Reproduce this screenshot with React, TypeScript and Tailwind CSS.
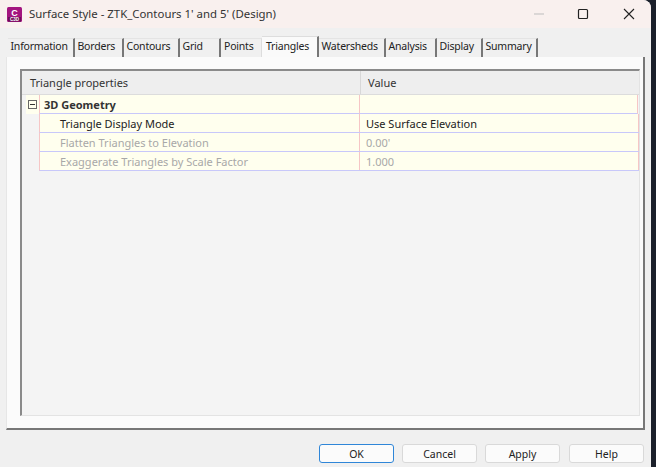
const tabs: [string, string][] = [
  ["Information", "w-[67px]"],
  ["Borders", "w-[49px]"],
  ["Contours", "w-[56px]"],
  ["Grid", "w-[41px]"],
  ["Points", "w-[41px]"],
  ["Triangles", "w-[57px]"],
  ["Watersheds", "w-[67px]"],
  ["Analysis", "w-[51px]"],
  ["Display", "w-[46px]"],
  ["Summary", "w-[55px]"],
];

const rows: { name: string; value: string; muted: boolean }[] = [
  { name: "Triangle Display Mode", value: "Use Surface Elevation", muted: false },
  { name: "Flatten Triangles to Elevation", value: "0.00'", muted: true },
  { name: "Exaggerate Triangles by Scale Factor", value: "1.000", muted: true },
];

export default function App() {
  return (
    <div className="w-[656px] h-[467px] overflow-hidden bg-[#1b202b] flex font-['Noto_Sans',sans-serif] text-[11px] text-[#222]">
      <div className="w-[651px] h-[467px] flex flex-col bg-[#f0f0f0] rounded-tr-lg overflow-hidden">
        <div className="h-[28px] shrink-0 bg-[#f9f0ee] flex items-center pl-[7px]">
          <svg width="15" height="15" viewBox="0 0 15 15" className="shrink-0">
            <rect width="15" height="15" rx="1.5" fill="#a3147f" />
            <rect x="1" y="10" width="13" height="4.5" fill="#6d0f58" />
            <text x="7.5" y="8.5" textAnchor="middle" fontSize="9" fontWeight="700" fill="#fff" fontFamily="Liberation Sans">C</text>
            <text x="7.5" y="14" textAnchor="middle" fontSize="4.5" fontWeight="700" fill="#fff" fontFamily="Liberation Sans">C3D</text>
          </svg>
          <span className="ml-[7px] text-[11.4px] text-[#333]">Surface Style - ZTK_Contours 1' and 5' (Design)</span>
          <div className="ml-auto flex items-center">
            <svg width="14" height="14" viewBox="0 0 14 14" className="mr-[30px]"><path d="M2 7h10" stroke="#bdbdbd" /></svg>
            <svg width="14" height="14" viewBox="0 0 14 14" className="mr-[32px]"><rect x="2.5" y="2.5" width="9" height="9" rx="1" fill="none" stroke="#222" strokeWidth="1.2" /></svg>
            <svg width="14" height="14" viewBox="0 0 14 14" className="mr-[15px]"><path d="M2 2l10 10M12 2L2 12" stroke="#222" strokeWidth="1.1" /></svg>
          </div>
        </div>

        <div className="flex h-[29px] shrink-0 items-end pl-[8px] bg-[#f0f0f0]">
          {tabs.map(([label, width]) => {
            const active = label === "Triangles";
            const plain = label === "Points";
            return (
              <div
                key={label}
                className={
                  active
                    ? `${width} h-[21px] bg-[#fafafa] border-r-2 border-r-[#777] border-t border-t-[#ddd] pl-[4px] leading-[18px] text-[10.5px] tracking-[-0.2px]`
                    : plain
                      ? `${width} h-[19px] bg-[#f0f0f0] border-r border-r-[#dddddd] border-t border-t-[#e4e4e4] pl-[3px] leading-[15px] text-[10.5px] tracking-[-0.2px]`
                      : `${width} h-[19px] bg-[#f0f0f0] border-r-2 border-r-[#777] border-t border-t-[#e4e4e4] pl-[2.5px] leading-[15px] text-[10.5px] tracking-[-0.2px]`
                }
              >
                {label}
              </div>
            );
          })}
        </div>

        <div className="mx-[6px] h-[373px] shrink-0 bg-[#fbfbfb] border-l border-l-[#e6e6e6] border-b-2 border-b-[#777] border-r-2 border-r-[#777] pl-[13px] pr-[3px] pt-[12px] pb-[12px]">
          <div className="h-full bg-[#f4f4f4] border-t-2 border-t-[#8a8a8a] border-l-2 border-l-[#8a8a8a] border-b border-b-[#e3e3e3] border-r border-r-[#e3e3e3]">
            <div className="flex h-[24px] bg-[#eeeeee] border-b border-b-[#dcdcdc] text-[#333]">
              <div className="w-[339px] pl-[8px] leading-[24px] border-r border-r-[#d8d8d8]">Triangle properties</div>
              <div className="flex-1 pl-[7px] leading-[24px]">Value</div>
            </div>
            <div className="flex h-[19px] pr-[1px]">
              <div className="ml-[4px] w-[13px] bg-[#ffffee] flex items-center justify-center">
                <div className="w-[9px] h-[9px] border border-[#666] flex items-center justify-center">
                  <div className="w-[5px] h-px bg-[#333]" />
                </div>
              </div>
              <div className="w-[321px] pl-[4px] bg-[#ffffee] border-b border-b-[#c8c8fa] border-l border-l-[#f6c6c6] font-bold leading-[20px] border-r border-r-[#f6c6c6] text-[#333]">3D Geometry</div>
              <div className="flex-1 bg-[#ffffee] border-b border-b-[#c8c8fa] border-r border-r-[#f6c6c6]" />
            </div>
            {rows.map((r) => (
              <div key={r.name} className={`flex h-[19px] bg-[#ffffee] border-b border-b-[#c8c8fa] ml-[17px] border-l border-l-[#f6c6c6] ${r.muted ? "text-[#a8a8a8]" : "text-[#222]"}`}>
                <div className="w-[320px] pl-[20px] leading-[20px] border-r border-r-[#f6c6c6]">{r.name}</div>
                <div className="flex-1 pl-[6px] leading-[20px] border-r border-r-[#f6c6c6]">{r.value}</div>
              </div>
            ))}
          </div>
        </div>

        <div className="flex justify-end gap-[8px] pr-[7px] pt-[14px]">
          {["OK", "Cancel", "Apply"].map((b) => (
            <button
              key={b}
              className={`w-[75px] h-[19px] rounded-[3px] bg-[#fbfbfb] leading-[16px] text-[10.5px] text-[#222] border ${b === "OK" ? "border-[#2f86d8]" : "border-[#d9d9d9]"}`}
            >
              {b}
            </button>
          ))}
          <button className="w-[75px] h-[19px] ml-[1px] rounded-[3px] bg-[#fbfbfb] leading-[16px] text-[10.5px] text-[#222] border border-[#d9d9d9]">Help</button>
        </div>
      </div>
    </div>
  );
}
